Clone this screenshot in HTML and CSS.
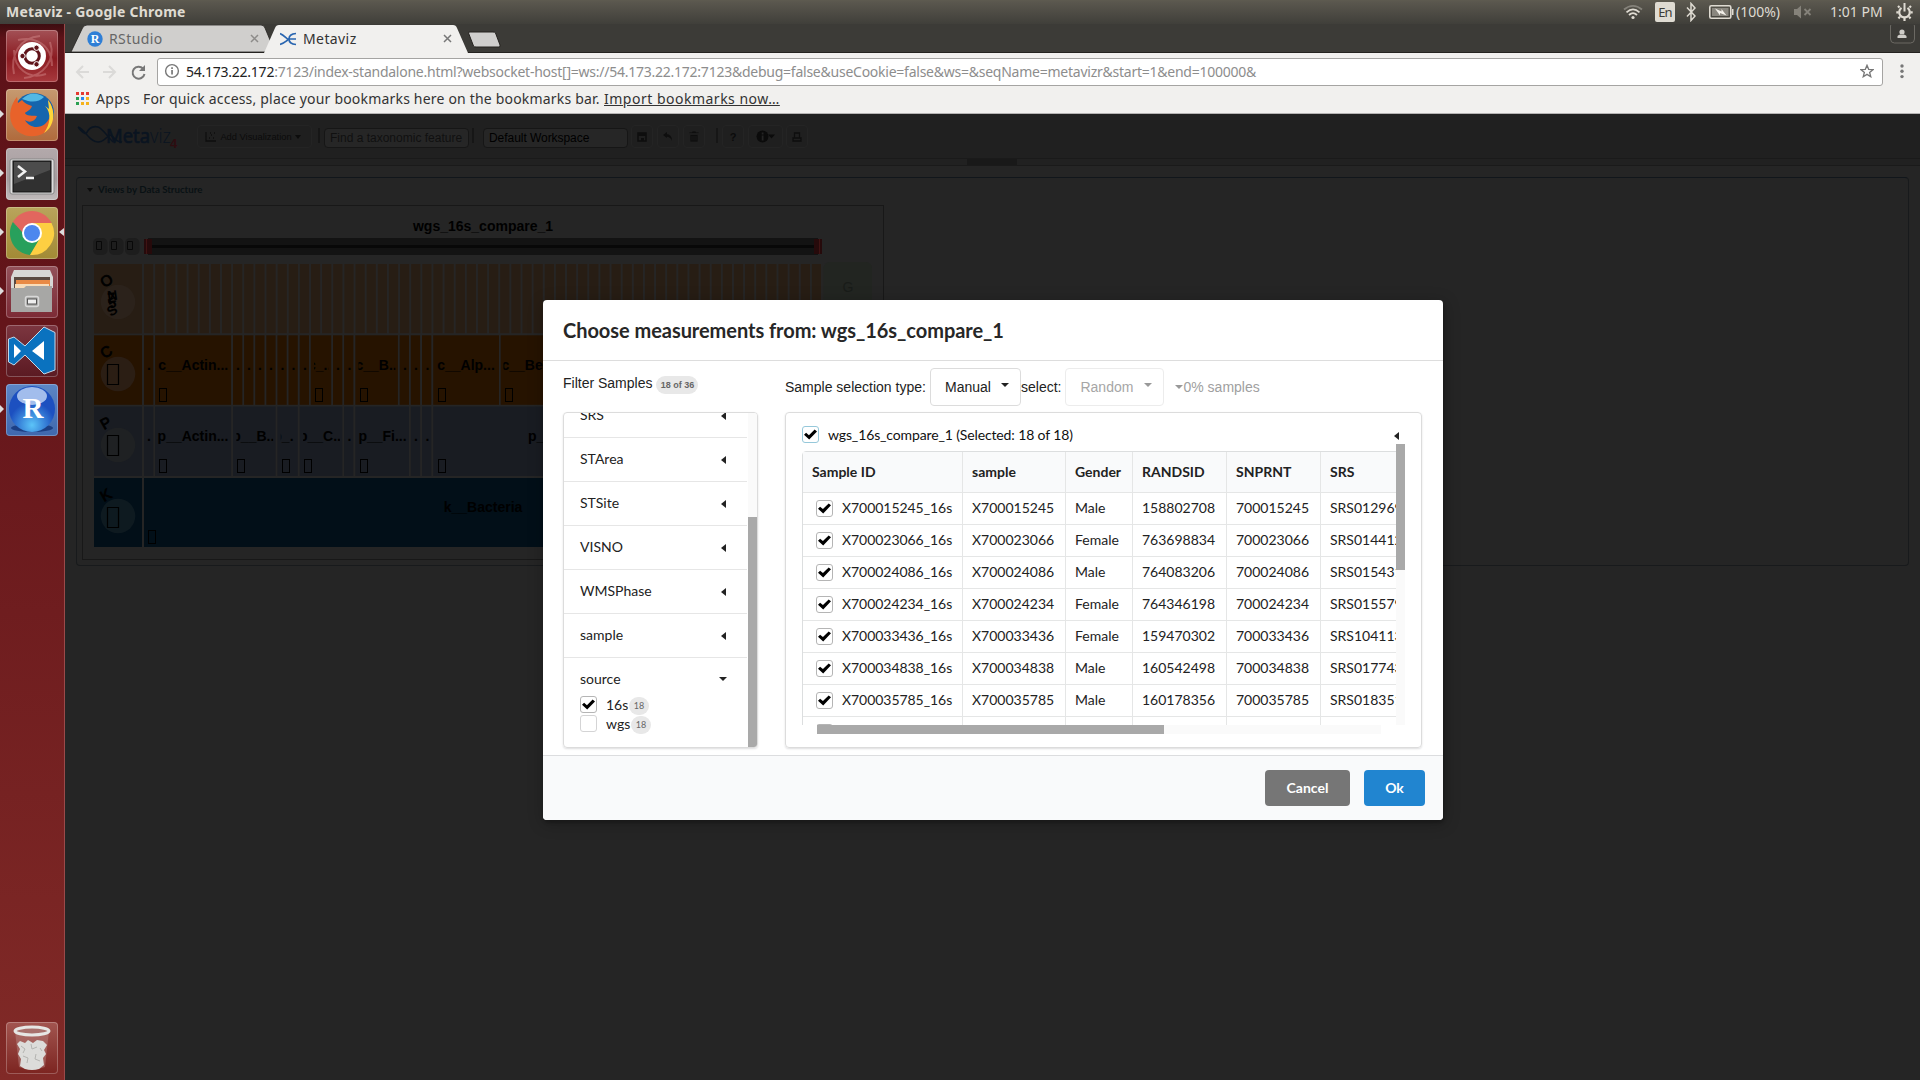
FILE: index.html
```html
<!DOCTYPE html>
<html lang="en">
<head>
<meta charset="utf-8">
<title>Metaviz</title>
<link rel="stylesheet" href="styles.css">
</head>
<body>
<header class="panel">
  <span class="panel-title">Metaviz - Google Chrome</span>
  <div class="indicators">
    <svg class="i-wifi" width="20" height="18" viewBox="0 0 20 18" fill="none" stroke="#dfdbd2" stroke-width="1.800"><path d="M1 6.500Q10-.8 19 6.500" stroke="#85827a"/><path d="M3.500 9.300Q10 3.500 16.500 9.300M6 12Q10 8.300 14 12"/><circle cx="10" cy="14.500" r="1.600" fill="#dfdbd2" stroke="none"/></svg>
    <span class="lang">En</span>
    <svg class="i-bt" width="10" height="20" viewBox="0 0 10 20" fill="none" stroke="#dfdbd2" stroke-width="1.500"><path d="M1 5.500 9 14 5 18.500V1.500L9 6 1 14.500"/></svg>
    <svg class="i-bat" width="25" height="14" viewBox="0 0 25 14"><rect x=".8" y=".8" width="21" height="12.400" rx="1.500" fill="none" stroke="#dfdbd2" stroke-width="1.600"/><rect x="3" y="3" width="16.500" height="8" fill="#8a877f"/><path d="M23 4h1.500v6H23z" fill="#dfdbd2"/><path d="M6 3.500 12.500 6.500 12.500 4 17.500 10.500 11 8v2.500z" fill="#f3f0ea"/></svg>
    <span class="pct">(100%)</span>
    <svg class="i-vol" width="18" height="14" viewBox="0 0 18 14"><path d="M0 4h3l4-3.500v13L3 10H0z" fill="#85827a"/><path d="m10.500 4 6 6m0-6-6 6" stroke="#85827a" stroke-width="1.800"/></svg>
    <span class="clock">1:01 PM</span>
    <svg width="17" height="20" viewBox="0 0 17 20" fill="none" stroke="#dfdbd2"><path d="M5.500 5.800a5.300 5.300 0 1 0 6 0" stroke-width="2.200"/><path d="M8.500 1v8.500" stroke-width="2"/><path d="M3.500 5.500 2 4M13.500 5.500 15 4M2.500 10.300H.3M14.500 10.300h2.200M4 14.800l-1.600 1.600M13 14.800l1.600 1.600M8.500 16v3" stroke-width="2.200"/></svg>
  </div>
</header>
<div class="desktop">
<nav class="launcher">
  <div class="tile t-ubuntu"><svg viewBox="0 0 52 52"><path d="M8 44C4 24 14 8 34 6M44 12c6 18-6 34-26 36M12 10c16-4 34 4 34 26M40 44C22 50 8 38 8 20" fill="none" stroke="#d99" stroke-width="2" opacity=".4"/><circle cx="26" cy="26" r="14" fill="#fff"/><circle cx="26" cy="26" r="7.300" fill="none" stroke="#5f1319" stroke-width="3"/><g fill="#5f1319" stroke="#fff"><circle cx="16.500" cy="26" r="2.700"/><circle cx="30.500" cy="17.700" r="2.700"/><circle cx="30.500" cy="34.300" r="2.700"/></g></svg></div>
  <div class="tile t-fox run"><svg viewBox="0 0 52 52"><circle cx="28" cy="24" r="20" fill="#1565ad"/><path d="M16 10Q26 0 38 8 32 14 22 12z" fill="#53b8e4"/><path d="M42 11c9 12 6 27-4 33-12 7-27 2-32-9C2 26 5 15 11 8l1 6 4-3c2 3 6 5 10 6-1 4-5 5-7 7 2 4 8 2 12 3-2 6-8 7-12 4 4 8 14 9 20 4 7-6 7-15 3-24z" fill="#e8622a"/><path d="M42 11c9 12 6 27-4 33 6-8 8-20 1-27l4 3z" fill="#ffd63a"/></svg></div>
  <div class="tile t-term run"><svg viewBox="0 0 52 52"><rect x="4" y="11" width="44" height="35" rx="2" fill="#ddd" stroke="#888"/><rect x="7" y="13" width="38" height="31" fill="#303030" stroke="#111"/><path d="M8 14h36v8L8 36z" fill="#4c4c4c"/><path d="m12 18 7 5.500-7 5.500M20 30h8" fill="none" stroke="#f2f2f2" stroke-width="2.500"/></svg></div>
  <div class="tile t-chrome run focus"><svg viewBox="0 0 52 52"><path d="M26 26 6.900 15A22 22 0 0 1 45 15z" fill="#e2665e"/><path d="M26 26 6.900 15A22 22 0 0 0 24 47.900L34 32z" fill="#28a05c"/><path d="M26 16H45.500A22 22 0 0 1 24 48l10-17z" fill="#fdcf42"/><path d="M7 15l10.500 16L26 16h19.500l-.5-1z" fill="#e2665e"/><path d="M7 15 17 32l9 4z" fill="#28a05c"/><circle cx="26" cy="26" r="10" fill="#fff"/><circle cx="26" cy="26" r="8" fill="#4d87ee"/></svg></div>
  <div class="tile t-files run"><svg viewBox="0 0 52 52"><path d="M8 4h36l3 7v11H5V11z" fill="#d8d8d6"/><path d="M8 11h36v12H8z" fill="#5a4a42"/><path d="M10 14h34v9H10z" fill="#e98a45"/><path d="M9 18h34v5H9z" fill="#f9dcb8"/><path d="M5 22h13l2-2h26v26H5z" fill="#a7a7a5"/><rect x="19.500" y="30.500" width="13" height="10" rx="2" fill="none" stroke="#d8d8d8" stroke-width="1.500"/><rect x="21.500" y="33" width="9" height="5" fill="#eee" stroke="#555"/></svg></div>
  <div class="tile t-code"><svg viewBox="0 0 52 52"><path d="M38 2 49 7.500V45L38 49 19 30 8 40 2.500 37V14L8 12l11 9z" fill="#0a72bf" stroke="#c3d9ea"/><path d="M38 16v19L26 26zM8 19v14l7-7z" fill="#fff"/></svg></div>
  <div class="tile t-r run"><svg viewBox="0 0 52 52"><defs><radialGradient id="ball" cy=".85"><stop offset="0" stop-color="#5cc4f8"/><stop offset="1" stop-color="#1c50c0"/></radialGradient></defs><ellipse cx="26" cy="44" rx="21" ry="4" fill="#1c3f84"/><circle cx="26" cy="25" r="23" fill="url(#ball)"/><ellipse cx="26" cy="12" rx="15" ry="9" fill="#cfe2fb" opacity=".75"/><text x="27" y="34" text-anchor="middle" class="r-letter">R</text></svg></div>
  <div class="tile t-trash"><svg viewBox="0 0 52 52"><path d="M9 9 13 45q13 5 26 0L43 9z" fill="#b88480" opacity=".5"/><path d="M11 22l3-3 5 2 3-3 5 3 4-3 6 1 4 4-3 5 2 4-3 4 1 7-5 4q-7 2-14 0l-5-3 1-7-3-5 2-5z" fill="#dcdcda"/><path d="M15 24l4 3-2 4m8-9 1 5 5-2m-14 9 5 2-1 5m9-9-1 5 5 2m0-13 2 3" stroke="#b4b4b1" fill="none"/><ellipse cx="26" cy="9" rx="17" ry="4" fill="#a8706c" stroke="#e6e6e4" stroke-width="3"/></svg></div>
</nav>
<main class="browser">
  <div class="tabs">
    <svg class="tab-shapes" width="1855" height="29" viewBox="65 24 1855 29"><path d="M65 52.500H1920" stroke="#24221f"/><path d="M71 52 82.500 28Q84 25 87 25H261Q264 25 265 28L275 52z" fill="#d0cfcd" stroke="#24221f" stroke-width=".8"/><path d="M264 53 275 28Q276 25 279 25H453Q456 25 457 28L468 53z" fill="#f1f0ee"/><path d="M468.500 33Q468 32 470 32H493Q495 32 495.500 33L500 45Q500.500 47 499 47H476Q474 47 473.500 46z" fill="#d0cfcd" stroke="#24221f"/><rect x="1890.500" y="22" width="24" height="21" rx="4" fill="#3c3b37" stroke="#6b6963"/><path d="M65 24h1855v1H65z" fill="#3c3b37"/><circle cx="1902" cy="32" r="2.600" fill="#cfcdc8"/><path d="M1897.500 38v-2q2-2.500 4.500-1 2.500-1.500 4.500 1v2z" fill="#cfcdc8"/></svg>
    <div class="tab tab-r"><svg width="16" height="16" viewBox="0 0 16 16"><circle cx="8" cy="8" r="7.700" fill="#2f7fd6"/><text x="8" y="12" text-anchor="middle" class="fav-r">R</text></svg><span>RStudio</span><svg width="9" height="9" viewBox="0 0 9 9"><path d="m1 1 7 7m0-7-7 7" stroke="#8d8c8a" stroke-width="1.500"/></svg></div>
    <div class="tab tab-m"><svg width="17" height="14" viewBox="0 0 17 14" fill="none" stroke="#2a66b0" stroke-width="1.700"><path d="M0 1.500C4 3 7 7 8 7S5 11 0 12.500M16 1.500Q9 2 9 7T16 12.500M9 7h7"/></svg><span>Metaviz</span><svg width="9" height="9" viewBox="0 0 9 9"><path d="m1 1 7 7m0-7-7 7" stroke="#777" stroke-width="1.500"/></svg></div>
  </div>
  <div class="navbar">
    <svg class="nav-icons" width="82" height="18" viewBox="0 0 82 18" fill="none" stroke-width="2"><path d="M14 9H2M8 3 2 9l6 6M28 9h12M34 3l6 6-6 6" stroke="#dbdad8"/><path d="M68 5.500A6 6 0 1 0 69.500 11" stroke="#777"/><path d="M70 2v6h-6z" fill="#777"/></svg>
    <div class="omnibox">
      <svg width="16" height="16" viewBox="0 0 16 16"><circle cx="8" cy="8" r="6.400" fill="none" stroke="#777" stroke-width="1.400"/><path d="M7.200 7h1.700v4.500H7.200zM7.200 4.300h1.700v1.600H7.200z" fill="#777"/></svg>
      <span class="url"><b>54.173.22.172</b>:7123/index-standalone.html?websocket-host[]=ws://54.173.22.172:7123&amp;debug=false&amp;useCookie=false&amp;ws=&amp;seqName=metavizr&amp;start=1&amp;end=100000&amp;</span>
      <svg width="14" height="14" viewBox="0 0 16 16"><path d="m8 1.500 1.900 4.600 5 .3-3.900 3.200 1.300 4.900L8 11.800l-4.300 2.700L5 9.600 1.100 6.400l5-.3z" fill="none" stroke="#777" stroke-width="1.500"/></svg>
    </div>
    <svg width="4" height="15" viewBox="0 0 4 15" fill="#777"><circle cx="2" cy="2" r="1.700"/><circle cx="2" cy="7.300" r="1.700"/><circle cx="2" cy="12.600" r="1.700"/></svg>
  </div>
  <div class="bookmarks">
    <svg width="13" height="13" viewBox="0 0 13 13"><path d="M0 0h3v3H0zM5 0h3v3H5zM10 0h3v3h-3z" fill="#e53a30"/><path d="M0 5h3v3H0zM0 10h3v3H0z" fill="#2ba052"/><path d="M5 5h3v3H5z" fill="#2a86f0"/><path d="M10 5h3v3h-3zM5 10h3v3H5zM10 10h3v3h-3z" fill="#f5b21a"/></svg>
    <span class="apps">Apps</span><span class="hint">For quick access, place your bookmarks here on the bookmarks bar.</span><span class="import">Import bookmarks now…</span>
  </div>
  <section class="page">
    <div class="toolbar">
      <svg class="logo" width="104" height="28" viewBox="0 0 104 28"><path d="M1 4C8 6 12 19 21 19S31 8 36 14 42 18 45 19M1 4C4 8 7 11 10 11M9 11C12 4 17 3 21 4S31 14 36 19" fill="none" stroke="#0a1420" stroke-width="1.500"/><text x="29" y="20" class="logo-a" textLength="44" lengthAdjust="spacingAndGlyphs">Meta</text><text x="73" y="20" class="logo-b" textLength="21" lengthAdjust="spacingAndGlyphs">viz</text><text x="93" y="25" class="logo-4">4</text></svg>
      <div class="tb-btn add"><svg width="12" height="11" viewBox="0 0 12 11"><path d="M1 1v9h10M4 7h1M6 4h1M8 7h1M9 2h1M5 2h1" fill="none" stroke="#0e0e0e" stroke-width="1.300"/></svg><span>Add Visualization</span><i class="caret-d"></i></div>
      <i class="sep s1"></i>
      <div class="tb-in find">Find a taxonomic feature</div>
      <i class="sep s2"></i>
      <div class="tb-in ws">Default Workspace</div>
      <div class="tb-btn sq"><svg width="10" height="10" viewBox="0 0 10 10"><path d="M1 1h8v8H1z" fill="none" stroke="#0e0e0e" stroke-width="1.500"/><path d="M1 1h8v3H1zM4 6h3v3H4z" fill="#0e0e0e"/></svg></div>
      <div class="tb-btn sq"><svg width="10" height="10" viewBox="0 0 10 10"><path d="M4 0v6L0 3zM3 2q6 0 6 7Q8 5 3 4.500z" fill="#0e0e0e"/></svg></div>
      <div class="tb-btn sq"><svg width="10" height="11" viewBox="0 0 10 11"><path d="M3 0h4v1h3v1.500H0V1h3zM1 3.500h8V11H1zM3 5v4.500M5 5v4.500M7 5v4.500" fill="#0e0e0e" stroke="#202020" stroke-width=".7"/></svg></div>
      <i class="sep s3"></i>
      <div class="tb-btn sq q">?</div>
      <div class="tb-btn info"><svg width="19" height="13" viewBox="0 0 19 13"><circle cx="6.500" cy="6.500" r="6" fill="#0b0b0b"/><path d="M5.700 2.500h1.800v2H5.700zM5.700 5.500h1.800v5H5.700z" fill="#242424"/><path d="M12 4.500h7l-3.500 4z" fill="#0b0b0b"/></svg></div>
      <div class="tb-btn sq"><svg width="10" height="10" viewBox="0 0 10 10"><path d="M2.500 6V1h5v5M1 6h8v3H1z" fill="none" stroke="#0e0e0e" stroke-width="1.300"/></svg></div>
    </div>
    <div class="splitter"><i></i></div>
    <div class="views">
      <div class="views-head"><i class="caret-d"></i>Views by Data Structure</div>
      <div class="chart">
        <svg width="800" height="353" viewBox="83 206 800 353" class="icicle">
          <defs>
            <pattern id="orders" x="144" y="264" width="11.130" height="70" patternUnits="userSpaceOnUse"><rect width="9.300" height="69.500" fill="#271d14"/></pattern>
            <g id="fold"><rect x=".5" y=".5" width="7" height="13" fill="none" stroke="#000"/></g>
          </defs>
          <text x="483" y="231" text-anchor="middle">wgs_16s_compare_1</text>
          <g fill="#1d1d1d"><rect x="93" y="238" width="14.500" height="17" rx="5"/><rect x="109" y="238" width="14.500" height="17" rx="5"/><rect x="125" y="238" width="14.500" height="17" rx="5"/></g>
          <path d="M96.500 241.500h5v8h-5zM111.500 241.500h5v8h-5zM127.500 241.500h5v8h-5z" fill="none" stroke="#080808"/>
          <path d="M148 238h670v17H148z" fill="#131313"/><path d="M148 245h670v3H148z" fill="#080808"/>
          <path d="M144 239h8v15h-8zM814 239h8v15h-8z" fill="#260a0b"/><path d="M146 239h1v15h-1zM819 239h1v15h-1z" fill="#401313"/>
          <rect x="144" y="264" width="679" height="69.500" fill="url(#orders)"/>
          <rect x="823.500" y="262" width="48.500" height="70" rx="6" fill="#222521"/><text x="848" y="292" text-anchor="middle" class="g-mark">G</text>
          <rect x="94" y="264" width="48" height="69.500" fill="#271d14"/>
          <rect x="94" y="335.300" width="48" height="69.500" fill="#261300"/>
          <rect x="94" y="406.500" width="48" height="69.500" fill="#191c22"/>
          <rect x="94" y="478" width="48" height="69" fill="#020f18"/>
          <circle cx="118" cy="302" r="17.300" fill="#2b221b"/><circle cx="118" cy="374" r="17.300" fill="#2b1e14"/><circle cx="118" cy="445" r="17.300" fill="#1f2123"/><circle cx="118" cy="516" r="17.300" fill="#0e1a20"/>
          <g class="rank"><text transform="translate(104 288) rotate(-30)">O</text><text transform="translate(104 359) rotate(-30)">C</text><text transform="translate(104 430) rotate(-30)">P</text><text transform="translate(104 502) rotate(-30)">K</text></g>
          <g class="blob"><text transform="translate(108 301) rotate(-8)">N</text><text transform="translate(108 303) rotate(-8)">Z</text><text transform="translate(110 309) rotate(-20)">5</text><text transform="translate(111 317) rotate(-35)">S</text></g>
          <path d="M107.500 364.500h11v20h-11zM107.500 435.500h11v20h-11zM107.500 507.500h11v20h-11z" fill="none" stroke="#000" stroke-width="1.200"/>
          <g fill="#261300">
            <rect x="144" y="335.300" width="9.300" height="69.500"/><rect x="155.100" y="335.300" width="76" height="69.500"/>
            <rect x="233" y="335.300" width="9.300" height="69.500"/><rect x="244.100" y="335.300" width="9.300" height="69.500"/><rect x="255.200" y="335.300" width="9.300" height="69.500"/><rect x="266.300" y="335.300" width="9.300" height="69.500"/><rect x="277.400" y="335.300" width="9.300" height="69.500"/><rect x="288.500" y="335.300" width="9.300" height="69.500"/><rect x="299.700" y="335.300" width="9.300" height="69.500"/>
            <rect x="310.800" y="335.300" width="20.400" height="69.500"/><rect x="333" y="335.300" width="9.300" height="69.500"/><rect x="344.100" y="335.300" width="9.300" height="69.500"/><rect x="355.300" y="335.300" width="42.600" height="69.500"/>
            <rect x="399.700" y="335.300" width="9.300" height="69.500"/><rect x="410.800" y="335.300" width="9.300" height="69.500"/><rect x="422" y="335.300" width="9.300" height="69.500"/><rect x="433.200" y="335.300" width="65.800" height="69.500"/><rect x="500.700" y="335.300" width="76" height="69.500"/>
          </g>
          <g fill="#191c22">
            <rect x="144" y="406.500" width="9.300" height="69.500"/><rect x="155.100" y="406.500" width="76" height="69.500"/><rect x="233" y="406.500" width="42.600" height="69.500"/><rect x="277.400" y="406.500" width="20.400" height="69.500"/><rect x="299.700" y="406.500" width="42.600" height="69.500"/><rect x="344.100" y="406.500" width="9.300" height="69.500"/><rect x="355.300" y="406.500" width="53.700" height="69.500"/><rect x="410.800" y="406.500" width="9.300" height="69.500"/><rect x="422" y="406.500" width="9.300" height="69.500"/><rect x="433.200" y="406.500" width="200" height="69.500"/>
          </g>
          <rect x="144" y="478" width="678" height="69" fill="#020f18"/>
          <g text-anchor="middle">
            <text x="149" y="370">.</text><text x="193.200" y="370">c__Actin...</text><text x="238" y="370">.</text><text x="249" y="370">.</text><text x="260" y="370">.</text><text x="271" y="370">.</text><text x="282.500" y="370">.</text><text x="293.500" y="370">.</text><text x="305" y="370">.</text><text x="338" y="370">.</text><text x="349.500" y="370">.</text><text x="405" y="370">.</text><text x="416" y="370">.</text><text x="427.500" y="370">.</text><text x="466" y="370">c__Alp...</text>
            <text x="149" y="441">.</text><text x="193" y="441">p__Actin...</text><text x="349.500" y="441">.</text><text x="382.500" y="441">p__Fi...</text><text x="416" y="441">.</text><text x="427.500" y="441">.</text>
            <text x="483" y="512">k__Bacteria</text>
          </g>
          <svg x="314" y="340" width="14.500" height="40"><text x="-6" y="30">c_...</text></svg>
          <svg x="358.500" y="340" width="37" height="40"><text x="-3" y="30">c__B...</text></svg>
          <svg x="503.500" y="340" width="70" height="40"><text x="-2" y="30">c__Be...</text></svg>
          <svg x="236.300" y="411" width="37" height="40"><text x="-4" y="30">p__B...</text></svg>
          <svg x="280.800" y="411" width="13" height="40"><text x="-7.500" y="30">p_...</text></svg>
          <svg x="303" y="411" width="37" height="40"><text x="-4" y="30">p__C...</text></svg>
          <text x="528" y="441">p__</text>
          <use href="#fold" x="159" y="388"/><use href="#fold" x="315" y="388"/><use href="#fold" x="360" y="388"/><use href="#fold" x="438" y="388"/><use href="#fold" x="505" y="388"/>
          <use href="#fold" x="159" y="459"/><use href="#fold" x="237" y="459"/><use href="#fold" x="282" y="459"/><use href="#fold" x="304" y="459"/><use href="#fold" x="360" y="459"/><use href="#fold" x="438" y="459"/><use href="#fold" x="148" y="530"/>
        </svg>
      </div>
    </div>
    <div class="overlay">
      <div class="modal">
        <h1>Choose measurements from: wgs_16s_compare_1</h1>
        <div class="content">
          <div class="left">
            <div class="filter-head">Filter Samples<span class="pill">18 of 36</span></div>
            <div class="filters">
              <div class="flist">
                <div class="fitem">SRS<i class="caret-l"></i></div>
                <div class="fitem">STArea<i class="caret-l"></i></div>
                <div class="fitem">STSite<i class="caret-l"></i></div>
                <div class="fitem">VISNO<i class="caret-l"></i></div>
                <div class="fitem">WMSPhase<i class="caret-l"></i></div>
                <div class="fitem">sample<i class="caret-l"></i></div>
                <div class="fitem last">source<i class="caret-s"></i></div>
                <div class="opt"><i class="box on"></i><span>16s</span><span class="cnt">18</span></div>
                <div class="opt"><i class="box off"></i><span>wgs</span><span class="cnt">18</span></div>
              </div>
              <div class="vtrack"><i></i></div>
            </div>
          </div>
          <div class="right">
            <div class="controls"><span class="lbl">Sample selection type:</span><div class="select manual">Manual<i class="caret-s"></i></div><span>select:</span><div class="select random">Random<i class="caret-s"></i></div><span class="pcts"><i class="caret-s"></i>0% samples</span></div>
            <div class="samples">
              <div class="all"><i class="box on focus"></i><span>wgs_16s_compare_1 (Selected: 18 of 18)</span><i class="caret-l"></i></div>
              <div class="scroller">
                <div class="clip">
                  <table>
                    <tr><th class="c1">Sample ID</th><th class="c2">sample</th><th class="c3">Gender</th><th class="c4">RANDSID</th><th class="c5">SNPRNT</th><th class="c6">SRS</th></tr>
                    <tr><td><i class="box on"></i>X700015245_16s</td><td>X700015245</td><td>Male</td><td>158802708</td><td>700015245</td><td>SRS012969</td></tr>
                    <tr><td><i class="box on"></i>X700023066_16s</td><td>X700023066</td><td>Female</td><td>763698834</td><td>700023066</td><td>SRS014412</td></tr>
                    <tr><td><i class="box on"></i>X700024086_16s</td><td>X700024086</td><td>Male</td><td>764083206</td><td>700024086</td><td>SRS015431</td></tr>
                    <tr><td><i class="box on"></i>X700024234_16s</td><td>X700024234</td><td>Female</td><td>764346198</td><td>700024234</td><td>SRS015579</td></tr>
                    <tr><td><i class="box on"></i>X700033436_16s</td><td>X700033436</td><td>Female</td><td>159470302</td><td>700033436</td><td>SRS104113</td></tr>
                    <tr><td><i class="box on"></i>X700034838_16s</td><td>X700034838</td><td>Male</td><td>160542498</td><td>700034838</td><td>SRS017743</td></tr>
                    <tr><td><i class="box on"></i>X700035785_16s</td><td>X700035785</td><td>Male</td><td>160178356</td><td>700035785</td><td>SRS018351</td></tr>
                    <tr><td><i class="box on"></i></td><td></td><td></td><td></td><td></td><td></td></tr>
                  </table>
                </div>
                <div class="strack"><i></i></div>
              </div>
              <div class="htrack"><i></i></div>
            </div>
          </div>
        </div>
        <div class="actions"><button class="cancel">Cancel</button><button class="ok">Ok</button></div>
      </div>
    </div>
  </section>
</main>
</div>
</body>
</html>
```
FILE: styles.css
```css
* { box-sizing: border-box; }
body { margin: 0; width: 1920px; height: 1080px; overflow: hidden; background: #252525; font-family: "Noto Sans", sans-serif; font-size: 14px; white-space: nowrap; }
svg { display: block; flex: none; }
i { display: block; flex: none; font-style: normal; }

.panel { height: 24px; padding: 0 7px 1px 6px; display: flex; justify-content: space-between; align-items: center; background: linear-gradient(#5e5b50, #5a574e 2px, #403f3a); color: #dfdbd2; }
.panel-title { font-weight: 700; font-size: 14px; letter-spacing: 0.23px; }
.indicators { display: flex; align-items: center; }
.lang { margin-left: 12px; width: 20px; height: 20px; border-radius: 2px; background: #dfdbd2; color: #3c3b37; font-size: 13px; line-height: 20px; text-align: center; letter-spacing: -0.8px; }
.i-bt { margin-left: 11px; }
.i-bat { margin-left: 13px; }
.pct { margin-left: 2px; width: 46px; letter-spacing: 0; }
.i-vol { margin-left: 12px; }
.clock { margin-left: 18px; width: 66px; letter-spacing: 0; }

.desktop { display: flex; height: 1056px; }
.launcher { width: 65px; padding: 6px 0 6px 6px; border-right: 1px solid #9a4a4a; display: flex; flex-direction: column; gap: 7px; background: linear-gradient(#3d0d10, #5d1218 14px, #64151a 300px, #812a27); }
.tile { width: 52px; height: 52px; border-radius: 4px; position: relative; box-shadow: inset 0 0 0 1px rgba(255,255,255,.25); }
.tile.run::before { content: ""; position: absolute; left: -6px; top: 21px; border: 4px solid transparent; border-left: 4px solid #ddd; border-right: 0; }
.tile.focus::after { content: ""; position: absolute; right: -6px; top: 21px; border: 4px solid transparent; border-right: 5px solid #ddd; border-left: 0; }
.t-ubuntu { background: linear-gradient(#a35156, #8b1a20 55%, #a83a3e); }
.t-fox { background: linear-gradient(#c69a70, #b06a3c); }
.t-term { background: linear-gradient(#b3a9ab, #a59c9e 60%, #c0bbbb); }
.t-chrome { background: linear-gradient(#b9a45c, #a28a35); }
.t-files { background: linear-gradient(#93525a, #7c2a35); }
.t-code { background: linear-gradient(#7c3640, #5b1a22); }
.t-r { background: linear-gradient(#5c86c6, #3f68ae); }
.t-trash { background: linear-gradient(#a25550, #7c2420); margin-top: auto; }
.r-letter { font: bold 29px "Liberation Serif", serif; fill: #fff; }

.browser { width: 1855px; display: flex; flex-direction: column; }
.tabs { height: 29px; position: relative; background: #3c3b37; display: flex; align-items: center; }
.tab-shapes { position: absolute; left: 0; top: 0; }
.tab { position: relative; display: flex; align-items: center; color: #333; }
.tab span { flex: 1; }
.tab-r { width: 172px; margin-left: 22px; color: #666; }
.tab-r span { margin-left: 6px; letter-spacing: 0.4px; }
.tab-m { width: 172px; margin-left: 21px; }
.tab-m span { margin-left: 6px; letter-spacing: 0.4px; }
.fav-r { font: bold 12px "Liberation Serif", serif; fill: #fff; }
.navbar { height: 36px; background: #f1f0ee; display: flex; align-items: center; padding: 1px 16px 0 10px; }
.omnibox { margin: 0 17px 0 0; width: 1728px; height: 28px; border: 1px solid #a5a4a2; border-radius: 3px; background: #fff; display: flex; align-items: center; padding: 0 8px 1px 6px; }
.url { flex: 1; margin-left: 6px; color: #8d8d8d; letter-spacing: -0.245px; }
.url b { font-weight: 400; color: #222; }
.bookmarks { height: 25px; background: #f1f0ee; border-bottom: 1px solid #b5b3b3; display: flex; align-items: center; padding: 0 0 5px 11px; color: #333; }
.apps { margin-left: 7px; width: 47px; letter-spacing: 0.4px; }
.hint { width: 461px; letter-spacing: 0.19px; }
.import { text-decoration: underline; letter-spacing: 0.5px; }

.page { position: relative; height: 966px; background: #252525; }
.toolbar { height: 45px; background: #202020; display: flex; padding: 11px 0 0 12px; border-bottom: 1px solid #1a1a1a; font-family: "Liberation Sans", sans-serif; }
.logo-a { font: 400 20px "Open Sans", sans-serif; fill: #0a1420; stroke: #0a1420; stroke-width: .7; }
.logo-b { font: 300 20px "Open Sans", sans-serif; fill: #0a1420; }
.logo-4 { font: bold 13px "Liberation Sans", sans-serif; fill: #2e0c10; }
.toolbar .logo { margin: -2px 16px 0 0; }
.tb-btn { height: 23px; border: 1px solid #242424; border-radius: 4px; display: flex; align-items: center; justify-content: center; color: #0b0b0b; font-size: 9.3px; background: #1f1f1f; }
.add { width: 115px; gap: 3px; padding-right: 3px; }
.caret-d { border: 3.500px solid transparent; border-top: 4px solid #0c0c0c; border-bottom: 0; }
.sep { width: 2px; height: 15px; margin-top: 3px; background: #161616; }
.s1 { margin-left: 6px; }
.s2 { margin-left: 3px; }
.s3 { margin: 3px 4px 0 7px; }
.tb-in { height: 20px; margin-top: 3px; border: 1px solid #161616; border-radius: 4px; background: #262626; font-size: 12px; line-height: 18px; padding-left: 5px; }
.find { width: 145px; margin-left: 4px; color: #101010; }
.ws { width: 145px; margin: 3px 3px 0 9px; color: #000; letter-spacing: -0.05px; }
.sq { width: 22px; margin-right: 4px; }
.q { font-weight: 700; font-size: 11px; }
.info { width: 35px; margin-right: 3px; }
.splitter { height: 7px; border-bottom: 1px solid #1a1a1a; background: #212121; padding-left: 902px; }
.splitter i { width: 50px; height: 6px; background: #191919; }
.views { margin: 11px 11px 0 11px; height: 389px; border: 1px solid #181a1c; border-top-color: #11161b; border-radius: 4px; padding: 0 5px; }
.views-head { height: 27px; display: flex; align-items: center; gap: 5px; padding: 0 0 6px 5px; font: 700 9.700px Lato, sans-serif; color: #091114; }
.views-head .caret-d { margin-top: 2px; }
.chart { width: 802px; height: 355px; border: 1px solid #181818; }
.icicle { font: 700 14px "Liberation Sans", sans-serif; }
.rank { font-weight: 400; font-size: 15px; stroke: #000; stroke-width: .8; }
.blob { font-size: 14px; }
.g-mark { font-weight: 400; font-size: 14px; fill: #191c19; }

.overlay { position: absolute; inset: 0; padding: 186px 0 0 478px; }
.modal { width: 900px; height: 520px; background: #fff; border-radius: 4px; overflow: hidden; color: #222; font: 14px Lato, sans-serif; display: flex; flex-direction: column; box-shadow: 1px 3px 3px rgba(0,0,0,.2), 1px 3px 15px 2px rgba(0,0,0,.2); }
h1 { margin: 0; height: 61px; padding-left: 20px; border-bottom: 1px solid #ddd; font: 700 20px/61px Lato, sans-serif; color: #272727; letter-spacing: -0.05px; }
.content { height: 394px; display: flex; padding: 7px 20px 0 20px; gap: 27px; }
.left { width: 195px; }
.filter-head { height: 44px; display: flex; padding: 6px 0 0 0; font: 14px/19px "Liberation Sans", sans-serif; }
.pill { margin-left: 4px; width: 42px; height: 18px; margin-top: 2px; border-radius: 9px; background: #e8e8e8; color: #666; font: 700 9px/18px "Liberation Sans", sans-serif; text-align: center; }
.filters { height: 336px; display: flex; border: 1px solid #dcdcdc; border-radius: 4px; box-shadow: 0 1px 2px rgba(34,36,38,.15); overflow: hidden; }
.flist { width: 183px; margin-top: -19px; }
.fitem { height: 44px; border-bottom: 1px solid #e6e6e6; display: flex; justify-content: space-between; align-items: center; padding: 0 21px 2px 16px; }
.fitem .caret-l, .fitem .caret-s { margin-top: 2px; }
.fitem.last { border: 0; height: 37px; padding-top: 5px; }
.fitem.last .caret-s { margin-right: -1px; }
.caret-l { border: 4.500px solid transparent; border-right: 5px solid #222; border-left: 0; }
.caret-s { border: 4px solid transparent; border-top: 4.500px solid #222; border-bottom: 0; }
.opt { height: 19px; display: flex; align-items: center; padding-left: 16px; }
.opt .box { margin-right: 9px; }
.cnt { margin-left: 1px; height: 18px; padding: 0 4.500px; margin-top: 2px; border-radius: 9px; background: #e8e8e8; color: #666; font-size: 9px; line-height: 18px; }
.box { width: 17px; height: 17px; border: 1px solid #b5b5b5; border-radius: 3px; background: #fff; position: relative; }
.box.off { border-color: #d4d4d5; }
.box.focus { border-color: #96c8da; }
.box.on::after { content: ""; position: absolute; left: 1px; top: 2px; width: 13px; height: 11px; background: #000; clip-path: polygon(0 52%, 16% 34%, 38% 56%, 82% 5%, 100% 22%, 40% 96%); }
.vtrack { width: 9px; margin-left: 1px; background: #fafafa; padding-top: 104px; }
.vtrack i { height: 230px; background: #a9a9a9; }
.right { width: 637px; }
.controls { height: 44px; display: flex; font: 14px/38px "Liberation Sans", sans-serif; }
.lbl { width: 145px; }
.select { height: 38px; line-height: 36px; border: 1px solid #dcdcdc; border-radius: 4px; display: flex; justify-content: space-between; padding: 0 11px 0 14px; }
.select .caret-s { margin-top: 14px; }
.manual { width: 91px; }
.random { width: 99px; margin: 0 12px 0 4px; border-color: #ececec; color: #a6a6a6; }
.random .caret-s, .pcts .caret-s { border-top-color: #999; }
.pcts { display: flex; align-items: center; height: 38px; color: #a0a0a0; margin-left: -1px; }
.samples { height: 336px; border: 1px solid #dcdcdc; border-radius: 4px; box-shadow: 0 1px 2px rgba(34,36,38,.15); padding: 13px 16px 0 16px; }
.all { height: 18px; display: flex; align-items: center; padding: 0 6px 1px 0; }
.all .caret-l { margin-top: 2px; }
.all span { flex: 1; margin: -1px 0 0 9px; color: #111; letter-spacing: -0.13px; }
.scroller { display: flex; height: 281px; }
.clip { width: 594px; height: 281px; overflow: hidden; padding-top: 7px; }
.strack { width: 9px; background: #fafafa; }
.strack i { height: 126px; background: #a9a9a9; }
table { border-collapse: separate; border-spacing: 0; table-layout: fixed; width: 640px; border: 1px solid #dcdedf; border-radius: 4px; }
th, td { padding: 0 0 2px 9px; text-align: left; border-left: 1px solid #e5e6e6; height: 32px; border-top: 1px solid #e5e6e6; }
th { height: 40px; background: #f9fafb; border-top: 0; }
th:first-child, td:first-child { border-left: 0; }
.c1 { width: 159px; } .c2 { width: 103px; } .c3 { width: 67px; } .c4 { width: 94px; } .c5 { width: 94px; }
td { line-height: 27px; }
td:first-child { padding-left: 13px; letter-spacing: -0.05px; }
td .box { display: inline-block; vertical-align: middle; margin: -2px 9px 0 0; }
.htrack { width: 564px; height: 9px; margin-left: 15px; background: #fafafa; }
.htrack i { width: 347px; height: 9px; background: #a9a9a9; }
.actions { height: 65px; border-top: 1px solid #dcdddf; background: #f9fafb; display: flex; justify-content: flex-end; padding: 14px 18px 0 0; gap: 14px; }
button { height: 36px; border: 0; border-radius: 4px; color: #fff; font: 700 14px Lato, sans-serif; padding: 0 0 2px; }
.cancel { width: 85px; background: #767676; }
.ok { width: 61px; background: #2185d0; }
```
